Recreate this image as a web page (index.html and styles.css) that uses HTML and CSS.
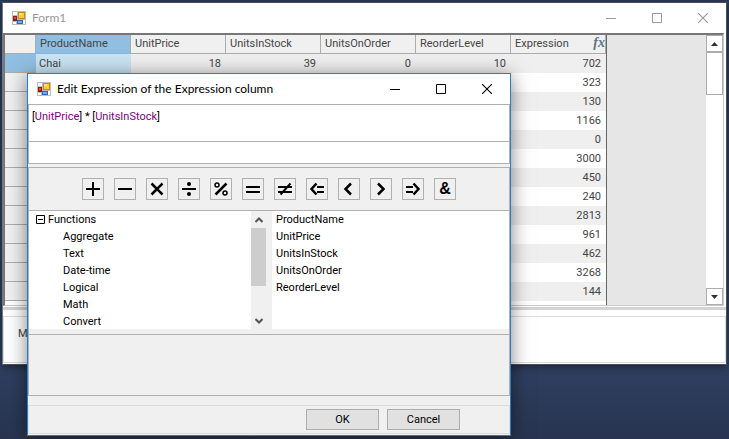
FILE: index.html
```html
<!DOCTYPE html>
<html lang="en">
<head>
<meta charset="utf-8">
<title>Form1</title>
<link rel="stylesheet" href="styles.css">
</head>
<body>
<svg class="defs" aria-hidden="true">
  <symbol id="app" viewBox="0 0 14 14" shape-rendering="crispEdges">
    <path d="M0 0h14v14H0z" fill="#bdbdbd"/>
    <path d="M1 1h4v3H1zM1 11h3v2H1zM11 9h2v4h-2z" fill="#fff"/>
    <path d="M6 1h7v7H6z" fill="#c98a0c"/><path d="M7 2h5v5H7z" fill="#fbcb3c"/><path d="M7 2h3v2H7z" fill="#fde489"/>
    <path d="M1 5h4v5H1z" fill="#8f1a12"/><path d="M2 6h2v2H2z" fill="#e2543c"/>
    <path d="M5 9h6v4H5z" fill="#2f62c4"/><path d="M6 10h4v2H6z" fill="#77a8f2"/>
  </symbol>
  <symbol id="min" viewBox="0 0 10 10"><path d="M0 5.500h10" stroke="currentColor"/></symbol>
  <symbol id="max" viewBox="0 0 10 10"><path d="M.5.5h9v9h-9z" fill="none" stroke="currentColor"/></symbol>
  <symbol id="close" viewBox="0 0 10 10"><path d="M0 0l10 10M10 0L0 10" stroke="currentColor" stroke-width="1.1"/></symbol>
</svg>

<main class="window">
  <header class="titlebar inactive">
    <svg class="app-icon"><use href="#app"/></svg>
    <h1>Form1</h1>
    <button aria-label="Minimize"><svg><use href="#min"/></svg></button>
    <button aria-label="Maximize"><svg><use href="#max"/></svg></button>
    <button aria-label="Close"><svg><use href="#close"/></svg></button>
  </header>
  <div class="grid">
    <div class="grid-view">
      <table>
        <colgroup><col class="col-head"><col><col><col><col><col><col></colgroup>
        <thead>
          <tr><th></th><th class="current">ProductName</th><th>UnitPrice</th><th>UnitsInStock</th><th>UnitsOnOrder</th><th>ReorderLevel</th><th><span class="expr">Expression<i>fx</i></span></th></tr>
        </thead>
        <tbody>
          <tr class="selected"><th></th><td>Chai</td><td>18</td><td>39</td><td>0</td><td>10</td><td>702</td></tr>
          <tr><th></th><td></td><td></td><td></td><td></td><td></td><td>323</td></tr>
          <tr><th></th><td></td><td></td><td></td><td></td><td></td><td>130</td></tr>
          <tr><th></th><td></td><td></td><td></td><td></td><td></td><td>1166</td></tr>
          <tr><th></th><td></td><td></td><td></td><td></td><td></td><td>0</td></tr>
          <tr><th></th><td></td><td></td><td></td><td></td><td></td><td>3000</td></tr>
          <tr><th></th><td></td><td></td><td></td><td></td><td></td><td>450</td></tr>
          <tr><th></th><td></td><td></td><td></td><td></td><td></td><td>240</td></tr>
          <tr><th></th><td></td><td></td><td></td><td></td><td></td><td>2813</td></tr>
          <tr><th></th><td></td><td></td><td></td><td></td><td></td><td>961</td></tr>
          <tr><th></th><td></td><td></td><td></td><td></td><td></td><td>462</td></tr>
          <tr><th></th><td></td><td></td><td></td><td></td><td></td><td>3268</td></tr>
          <tr><th></th><td></td><td></td><td></td><td></td><td></td><td>144</td></tr>
        </tbody>
      </table>
    </div>
    <div class="filler"></div>
    <div class="scroll">
      <button aria-label="Scroll up"><svg viewBox="0 0 7 4"><path d="M0 4L3.500 0L7 4z"/></svg></button>
      <div class="thumb"></div>
      <button class="down" aria-label="Scroll down"><svg viewBox="0 0 7 4"><path d="M0 0L3.500 4L7 0z"/></svg></button>
    </div>
  </div>
  <div class="splitter"></div>
  <div class="group">M</div>
</main>

<section class="dialog" role="dialog" aria-labelledby="dialog-title">
  <header class="titlebar">
    <svg class="app-icon"><use href="#app"/></svg>
    <h2 id="dialog-title">Edit Expression of the Expression column</h2>
    <button aria-label="Minimize"><svg><use href="#min"/></svg></button>
    <button aria-label="Maximize"><svg><use href="#max"/></svg></button>
    <button aria-label="Close"><svg><use href="#close"/></svg></button>
  </header>
  <div class="editor">
    <div class="code" role="textbox" contenteditable="true" spellcheck="false" aria-label="Expression">[<span>UnitPrice</span>] * [<span>UnitsInStock</span>]</div>
    <div class="errors"></div>
  </div>
  <div class="builder">
    <div class="tools">
      <button aria-label="Add"><svg viewBox="0 0 20 20"><path d="M3 10h14M10 3v14"/></svg></button>
      <button aria-label="Subtract"><svg viewBox="0 0 20 20"><path d="M3 10h14"/></svg></button>
      <button aria-label="Multiply"><svg viewBox="0 0 20 20"><path class="bold" d="M4.500 4.500l11 11M15.500 4.500l-11 11"/></svg></button>
      <button aria-label="Divide"><svg viewBox="0 0 20 20"><path d="M3 10h14"/><circle class="dot" cx="10" cy="5" r="2"/><circle class="dot" cx="10" cy="15" r="2"/></svg></button>
      <button aria-label="Modulo"><svg viewBox="0 0 20 20"><path class="bold" d="M15.500 4.500l-11 11"/><circle class="ring" cx="6" cy="6" r="2"/><circle class="ring" cx="14" cy="14" r="2"/></svg></button>
      <button aria-label="Equal"><svg viewBox="0 0 20 20"><path d="M3 8h14M3 13h14"/></svg></button>
      <button aria-label="Not equal"><svg viewBox="0 0 20 20"><path d="M3 8h14M3 13h14M15.500 4.500l-10 11"/></svg></button>
      <button aria-label="Less or equal"><svg viewBox="0 0 20 20"><path d="M10 8h7M10 13h7"/><path class="bold" d="M9.500 4.500L4.500 10l5 5.500"/></svg></button>
      <button aria-label="Less"><svg viewBox="0 0 20 20"><path class="bold" d="M12 4.500L6.500 10l5.500 5.500"/></svg></button>
      <button aria-label="Greater"><svg viewBox="0 0 20 20"><path class="bold" d="M7 4.500l5.500 5.500L7 15.500"/></svg></button>
      <button aria-label="Greater or equal"><svg viewBox="0 0 20 20"><path d="M3 8h7M3 13h7"/><path class="bold" d="M10.500 4.500l5 5.500l-5 5.500"/></svg></button>
      <button>&amp;</button>
    </div>
    <div class="lists">
      <div class="tree">
        <div class="root"><svg class="minus" viewBox="0 0 9 9"><path d="M.5.5h8v8h-8zM2 4.500h5"/></svg>Functions</div>
        <ul>
          <li>Aggregate</li><li>Text</li><li>Date-time</li><li>Logical</li><li>Math</li><li>Convert</li>
        </ul>
      </div>
      <div class="tree-scroll">
        <button aria-label="Scroll up"><svg viewBox="0 0 8 6"><path d="M.5 5L4 1.500L7.500 5"/></svg></button>
        <div class="thumb"></div>
        <button aria-label="Scroll down"><svg viewBox="0 0 8 6"><path d="M.5 1L4 4.500L7.500 1"/></svg></button>
      </div>
      <ul class="fields">
        <li>ProductName</li><li>UnitPrice</li><li>UnitsInStock</li><li>UnitsOnOrder</li><li>ReorderLevel</li>
      </ul>
    </div>
    <div class="help"></div>
  </div>
  <footer>
    <button>OK</button>
    <button>Cancel</button>
  </footer>
</section>
</body>
</html>
```

FILE: styles.css
```css
* { box-sizing: border-box; }

body {
  margin: 0;
  min-height: 100vh;
  padding: 2px;
  background: linear-gradient(#2b3b5c, #2f4061 83%, #283450);
  font: 11px/17px Roboto, "Liberation Sans", sans-serif;
  color: #000;
  overflow: hidden;
}

button { font: inherit; color: inherit; padding: 0; border: 0; background: none; }
ul { list-style: none; margin: 0; padding: 0; }
.defs { display: none; }

.window {
  border: 1px solid #4b4f5c;
  border-left-color: #777b88;
  background: #fff;
  color: #444;
  box-shadow: 0 2px 8px rgba(0, 0, 0, .45);
}

.titlebar { display: flex; align-items: center; height: 30px; color: #000; }
.titlebar h1, .titlebar h2 {
  flex: 1;
  margin: 0;
  font: 12px/16px Lato, "Open Sans", sans-serif;
  white-space: nowrap;
}
.titlebar button { width: 46px; height: 30px; display: grid; place-items: center; }
.titlebar button svg { width: 10px; height: 10px; }
.titlebar .app-icon { width: 14px; height: 14px; margin: 0 6px 0 9px; }
.inactive { color: #999; }

.grid {
  display: flex;
  height: 273px;
  margin-right: 2px;
  border: 1px solid #666;
  border-width: 2px 1px 1px 2px;
  border-color: #777 #ccc #ccc #777;
  overflow: hidden;
}
.grid-view { flex: none; border-right: 1px solid #666; overflow: hidden; }
.filler { flex: 1; background: #e6e6e6; }

table { table-layout: fixed; width: 601px; border-collapse: separate; border-spacing: 0; }
col { width: 95px; }
.col-head { width: 31px; }
th, td {
  height: 19px;
  padding: 0 5px 0 3px;
  font-weight: normal;
  line-height: 18px;
  text-align: right;
  white-space: nowrap;
}
th { background: #f0f0f0; text-align: left; border-bottom: 1px solid #acacac; }
thead th { border-right: 1px solid #acacac; padding-left: 4px; }
tbody tr:nth-child(odd) { background: #efefef; }
thead .current, .selected th { background: #91bfe1; }
.selected td:nth-child(2) { background: #c9e3f3; text-align: left; }
.expr { display: flex; justify-content: space-between; margin-right: -5px; }
.expr i { font: italic bold 14px/16px "Liberation Serif", serif; color: #5d7687; }

.scroll { width: 17px; display: flex; flex-direction: column; background: #fff; }
.scroll button, .scroll .thumb { height: 17px; border: 1px solid #acacac; background: #fff; }
.scroll button { display: grid; place-items: center; }
.scroll button svg { width: 7px; height: 4px; fill: #333; }
.scroll .thumb { height: 43px; }
.scroll .down { margin-top: auto; }

.splitter { height: 3px; margin: 1px 0 6px; background: #d3d3d3; }
.group { height: 47px; margin-bottom: 1px; padding: 8px 14px; border: 1px solid #dcdcdc; }

.dialog {
  position: absolute;
  left: 27px;
  right: 218px;
  top: 73px;
  border: 1px solid #1883d7;
  background: #f0f0f0;
  box-shadow: 0 3px 18px rgba(0, 0, 0, .5);
}
.dialog .titlebar { background: #fff; }

.editor, .builder { border: 1px solid #b0b0b0; }
.editor { background: #fff; margin-bottom: 3px; }
.code { height: 37px; padding: 3px; border-bottom: 1px solid #b0b0b0; outline: 0; }
.code span { color: #800080; }
.errors { height: 21px; }

.tools {
  display: flex;
  justify-content: center;
  gap: 10px;
  padding: 10px 0;
  border-bottom: 1px solid #b0b0b0;
}
.tools button { width: 22px; height: 22px; border: 1px solid #b0b0b0; font: bold 16px/20px "Liberation Sans", sans-serif; }
.tools svg { display: block; width: 20px; height: 20px; fill: none; stroke: #000; stroke-width: 2; }
.tools .bold { stroke-width: 2.5; }
.tools .dot { fill: #000; stroke: none; }
.tools .ring { stroke-width: 1.5; }

.lists { display: flex; height: 118px; margin-bottom: 5px; background: #fff; overflow: hidden; }
.tree { flex: 0 0 222px; }
.root { display: flex; align-items: center; gap: 3px; padding-left: 7px; }
.minus { width: 9px; height: 9px; fill: none; stroke: #000; }
.tree ul { padding-left: 34px; }
.tree-scroll { flex: none; width: 21px; padding-right: 6px; display: flex; flex-direction: column; background: #f0f0f0; }
.tree-scroll button { height: 17px; display: grid; place-items: center; }
.tree-scroll button:last-child { margin-top: auto; }
.tree-scroll svg { width: 8px; height: 6px; fill: none; stroke: #555; stroke-width: 2; }
.tree-scroll .thumb { height: 58px; background: #cdcdcd; }
.fields { flex: 1; padding-left: 4px; }
.help { height: 61px; border-top: 1px solid #b0b0b0; }

.dialog footer {
  display: flex;
  justify-content: flex-end;
  gap: 8px;
  margin: 9px 0 1px;
  padding: 3px 49px 3px 0;
  border: 1px solid #dcdcdc;
}
.dialog footer button { width: 73px; height: 21px; border: 1px solid #adadad; background: #e1e1e1; }
```
